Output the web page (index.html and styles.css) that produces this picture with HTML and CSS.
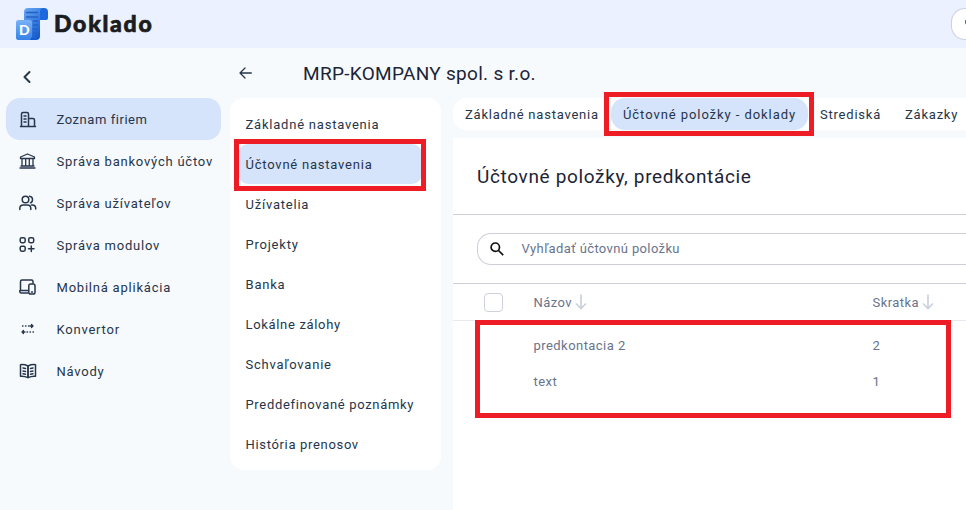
FILE: index.html
```html
<!DOCTYPE html>
<html lang="sk">
<head>
  <meta charset="UTF-8">
  <meta name="viewport" content="width=device-width, initial-scale=1.0">
  <title>Doklado</title>
  <link rel="stylesheet" href="styles.css">
</head>
<body>
  <!-- Header -->
  <header class="topbar">
    <div class="brand">
      <svg class="brand-logo" width="32" height="32" viewBox="0 0 32 32">
        <defs>
          <linearGradient id="paper" x1="0" y1="0" x2="0.6" y2="1">
            <stop offset="0" stop-color="#69a9f6"/>
            <stop offset="1" stop-color="#1458cd"/>
          </linearGradient>
          <linearGradient id="tile" x1="0" y1="0" x2="0" y2="1">
            <stop offset="0" stop-color="#78b2f8"/>
            <stop offset="1" stop-color="#3682e6"/>
          </linearGradient>
        </defs>
        <path d="M12 0h16v4l-4 4v20q0 4-4 4H8V4q0-4 4-4z" fill="url(#paper)"/>
        <path d="M24 12V4q0-4 4-4t4 4v6q0 2-2 2z" fill="#1c68dc"/>
        <path d="M10 4.500h12M10 9h12M17 13h5M17 17h5M17 21h5M17 25h5" stroke="#2262c6" stroke-width="1.300"/>
        <rect x="0" y="12" width="16" height="20" rx="2.500" fill="url(#tile)"/>
        <path d="M16 29q0 3 3 3H14z" fill="#1458cd"/>
        <text class="brand-letter" x="3" y="26.500">D</text>
      </svg>
      <span class="brand-name">Doklado</span>
    </div>
    <div class="topbar-btn"><span class="topbar-dot"></span></div>
  </header>

  <div class="layout">
    <!-- Sidebar -->
    <aside class="sidebar">
      <div class="collapse">
        <svg class="icon" width="10" height="14" viewBox="0 0 10 14"><path d="M7.500 2 2.500 7l5 5" stroke-width="2"/></svg>
      </div>
      <nav class="nav">
        <a class="nav-item first active">
          <svg class="icon" width="18" height="18" viewBox="0 0 18 18"><path d="M2.500 16.500V4q0-1.500 1.500-1.500h4Q9.500 2.500 9.500 4v12.500M9.500 8.500H14q1.500 0 1.500 1.500v6.500M1.500 16.500h15M5 6h2M5 9h2M5 12h2"/></svg>
          <span>Zoznam firiem</span>
        </a>
        <a class="nav-item">
          <svg class="icon icon-small" width="18" height="18" viewBox="0 0 18 18"><path d="M1.500 6.500V5L8.500 2l7 3v1.500zM3 7v7M6.700 7v7M10.300 7v7M14 7v7M1 16h15M2 14h13"/></svg>
          <span>Správa bankových účtov</span>
        </a>
        <a class="nav-item">
          <svg class="icon" width="18" height="18" viewBox="0 0 18 18"><circle cx="6.500" cy="5.500" r="3.300"/><path d="M.8 15.500v-1q0-3.500 3.500-3.500h4q3.500 0 3.500 3.500v1M10.500 2.200q3 .3 3 3.300t-2 3.300M12.500 11h.7q3.500 0 3.500 3.500v.5"/></svg>
          <span>Správa užívateľov</span>
        </a>
        <a class="nav-item">
          <svg class="icon" width="18" height="18" viewBox="0 0 18 18"><rect x="1.200" y="1.700" width="5" height="5" rx="1.600"/><rect x="9.700" y="1.700" width="5" height="5" rx="1.600"/><rect x="1.200" y="10.200" width="5" height="5" rx="1.600"/><path d="M12.300 10v5.500M9.500 12.700H15"/></svg>
          <span>Správa modulov</span>
        </a>
        <a class="nav-item">
          <svg class="icon" width="18" height="18" viewBox="0 0 18 18"><path d="M1.500 12.500V3.500Q1.500 2 3 2h9.500Q14 2 14 3.500V5M9 12.500H.8v1q0 1.500 1.500 1.500H9"/><rect x="9.800" y="6" width="6.200" height="10" rx="1.800"/><path d="M12.500 14h1"/></svg>
          <span>Mobilná aplikácia</span>
        </a>
        <a class="nav-item">
          <svg class="icon icon-small" width="18" height="18" viewBox="0 0 18 18"><path d="M3.500 6h7M8 12h6.500" stroke-dasharray="0.5 2.500"/><path d="M11 6h3M12.500 4.500 14 6l-1.500 1.500M6 12H3M4.500 10.500 3 12l1.500 1.500"/></svg>
          <span>Konvertor</span>
        </a>
        <a class="nav-item">
          <svg class="icon" width="18" height="18" viewBox="0 0 18 18"><path d="M9 4Q5.500 2.300 1.500 2.700v11.500q4-.4 7.500 1.500 3.500-1.900 7.500-1.500V2.700Q12.500 2.300 9 4zv11.500M4 6l2.500.5M4 9l2.500.5M4 11.700l2.500.5M14 6l-2.500.5M14 9l-2.500.5M14 11.700l-2.500.5"/><path d="M9 4v11.500"/></svg>
          <span>Návody</span>
        </a>
      </nav>
    </aside>

    <!-- Company detail -->
    <main class="main">
      <div class="page-head">
        <svg class="icon" width="14" height="14" viewBox="0 0 14 14"><path d="M12.300 7H1M6 2 1 7l5 5" stroke-width="1.300"/></svg>
        <h1 class="page-title">MRP-KOMPANY spol. s r.o.</h1>
      </div>

      <div class="columns">
        <nav class="submenu">
          <a class="submenu-item">Základné nastavenia</a>
          <a class="submenu-item active">Účtovné nastavenia<span class="mark mark-menu"></span></a>
          <a class="submenu-item">Užívatelia</a>
          <a class="submenu-item">Projekty</a>
          <a class="submenu-item">Banka</a>
          <a class="submenu-item tight">Lokálne zálohy</a>
          <a class="submenu-item">Schvaľovanie</a>
          <a class="submenu-item tight">Preddefinované poznámky</a>
          <a class="submenu-item tight">História prenosov</a>
        </nav>

        <section class="content">
          <div class="tabs">
            <a class="tab tab-basic">Základné nastavenia</a>
            <a class="tab tab-items active">Účtovné položky - doklady<span class="mark mark-tab"></span></a>
            <a class="tab tab-centers">Strediská</a>
            <a class="tab">Zákazky</a>
          </div>

          <div class="panel">
            <h2 class="panel-title">Účtovné položky, predkontácie</h2>
            <div class="search-row">
              <div class="search">
                <svg class="search-icon" width="16" height="16" viewBox="0 0 16 16"><circle cx="6.300" cy="6.200" r="4.200"/><path d="m9.500 9.500 4.700 4.700"/></svg>
                <span class="search-text">Vyhľadať účtovnú položku</span>
              </div>
            </div>
            <div class="table">
              <div class="row row-head">
                <span class="checkbox"></span>
                <span class="cell">Názov
                  <svg class="sort" width="12" height="16" viewBox="0 0 12 16"><path d="M6 .5v14M1 9.500l5 5 5-5"/></svg>
                </span>
                <span class="cell">Skratka
                  <svg class="sort" width="12" height="16" viewBox="0 0 12 16"><path d="M6 .5v14M1 9.500l5 5 5-5"/></svg>
                </span>
              </div>
              <div class="rows">
                <div class="row">
                  <span></span>
                  <span class="cell">predkontacia 2</span>
                  <span class="cell">2</span>
                </div>
                <div class="row">
                  <span></span>
                  <span class="cell">text</span>
                  <span class="cell">1</span>
                </div>
                <span class="mark mark-rows"></span>
              </div>
            </div>
          </div>
        </section>
      </div>
    </main>
  </div>
</body>
</html>
```
FILE: styles.css
```css
/* Reset */
* {
  margin: 0;
  padding: 0;
  box-sizing: border-box;
}

body {
  height: 100vh;
  overflow: hidden;
  background-color: #f6fafd;
  color: #26354a;
  font-family: Roboto, "Noto Sans", sans-serif;
  font-size: 13px;
  letter-spacing: 0.78px;
  white-space: nowrap;
}

.icon {
  flex-shrink: 0;
  fill: none;
  stroke: #27364b;
  stroke-width: 1.5;
  stroke-linecap: round;
  stroke-linejoin: round;
}

.icon-small {
  stroke-width: 1.3;
}

/* Header */
.topbar {
  display: flex;
  justify-content: space-between;
  height: 48px;
  padding: 8px 0 0 16px;
  background-color: #ebf1ff;
}

.brand {
  display: flex;
  gap: 6px;
}

.brand-letter {
  font: 900 14px Lato, sans-serif;
  letter-spacing: 0;
  fill: #fff;
}

.brand-name {
  font-family: Lato, sans-serif;
  font-size: 23px;
  font-weight: 900;
  line-height: 31px;
  letter-spacing: 1.75px;
  color: #1b1c20;
  -webkit-text-stroke: 0.7px #1b1c20;
}

.topbar-btn {
  width: 15px;
  height: 32px;
  padding: 10px 0 0 13px;
  overflow: hidden;
  border: 1px solid #cdd1dd;
  border-right: none;
  border-radius: 14px 0 0 14px;
  background-color: #fff;
}

.topbar-dot {
  display: block;
  width: 10px;
  height: 6px;
  border-radius: 3px;
  background-color: #4a5160;
}

/* Layout */
.layout {
  display: flex;
  height: 462px;
}

.sidebar {
  width: 229px;
  flex-shrink: 0;
  padding: 0 8px 0 6px;
}

.collapse {
  display: flex;
  align-items: center;
  height: 50px;
  padding: 8px 0 0 16px;
}

.nav-item {
  display: flex;
  align-items: center;
  gap: 19.500px;
  height: 42px;
  padding-left: 13px;
  border-radius: 14px;
}

.nav-item.first {
  letter-spacing: 0.55px;
}

.nav-item.active,
.submenu-item.active,
.tab.active {
  background-color: #d5e3fb;
}

.main {
  flex: 1;
  min-width: 0;
  padding-left: 1px;
}

.page-head {
  display: flex;
  align-items: center;
  gap: 50px;
  height: 50px;
  padding-left: 9px;
}

.page-title,
.panel-title {
  font-size: 19px;
  font-weight: 400;
  letter-spacing: 0.3px;
  color: #1c2436;
}

.columns {
  display: flex;
  gap: 12px;
  height: 412px;
}

/* Company menu */
.submenu {
  width: 211px;
  height: 372px;
  flex-shrink: 0;
  padding: 6px 19px 6px 8px;
  border-radius: 14px;
  background-color: #fff;
}

.submenu-item {
  display: block;
  position: relative;
  height: 40px;
  padding-left: 7.500px;
  border-radius: 10px;
  line-height: 41px;
}

.submenu-item.tight {
  letter-spacing: 0.67px;
}

/* Content */
.content {
  flex: 1;
  min-width: 0;
}

.tabs {
  display: flex;
  height: 32px;
  margin-bottom: 8px;
  border-radius: 14px 0 0 14px;
  background-color: #fff;
}

.tab {
  position: relative;
  flex-shrink: 0;
  padding-left: 12px;
  border-radius: 14px;
  line-height: 33px;
}

.tab-basic {
  width: 158px;
}

.tab-items {
  width: 197px;
  letter-spacing: 0.93px;
}

.tab-centers {
  width: 85px;
}

.panel {
  height: 372px;
  background-color: #fff;
}

.panel-title {
  height: 77px;
  padding-left: 24px;
  border-bottom: 1px solid #cfd1da;
  line-height: 77px;
  letter-spacing: 0.65px;
}

.search-row {
  height: 68px;
  padding: 18px 0 0 24px;
}

.search {
  display: flex;
  align-items: center;
  gap: 16.500px;
  height: 32px;
  padding-left: 11px;
  border: 1px solid #cfcfdc;
  border-right: none;
  border-radius: 14px 0 0 14px;
  color: #69748c;
  letter-spacing: 0.37px;
}

.search-text {
  padding-bottom: 2px;
}

.search-icon {
  fill: none;
  stroke: #111;
  stroke-width: 1.7;
}

/* Table */
.table {
  border-top: 1px solid #cfcfdc;
  color: #69748c;
  letter-spacing: 0.45px;
}

.row {
  display: grid;
  grid-template-columns: 49.500px 339px 1fr;
  align-items: center;
  height: 36px;
  padding-left: 31px;
}

.row-head {
  height: 37px;
  border-bottom: 1px solid #e8e9ef;
}

.cell {
  display: flex;
  align-items: center;
  gap: 2.500px;
}

.checkbox {
  width: 19px;
  height: 19px;
  border: 1px solid #cfd2dd;
  border-radius: 4px;
}

.sort {
  fill: none;
  stroke: #cdd1dc;
  stroke-width: 1.7;
}

.rows {
  position: relative;
  padding-top: 6px;
}

/* Red highlight frames */
.mark {
  position: absolute;
  border: 5px solid #ee1c25;
}

.mark-menu {
  top: -5px;
  left: -4px;
  width: 192px;
  height: 52px;
}

.mark-tab {
  top: -6px;
  left: -7px;
  width: 210px;
  height: 44px;
}

.mark-rows {
  top: -1px;
  left: 22px;
  width: 476px;
  height: 98px;
}
```
